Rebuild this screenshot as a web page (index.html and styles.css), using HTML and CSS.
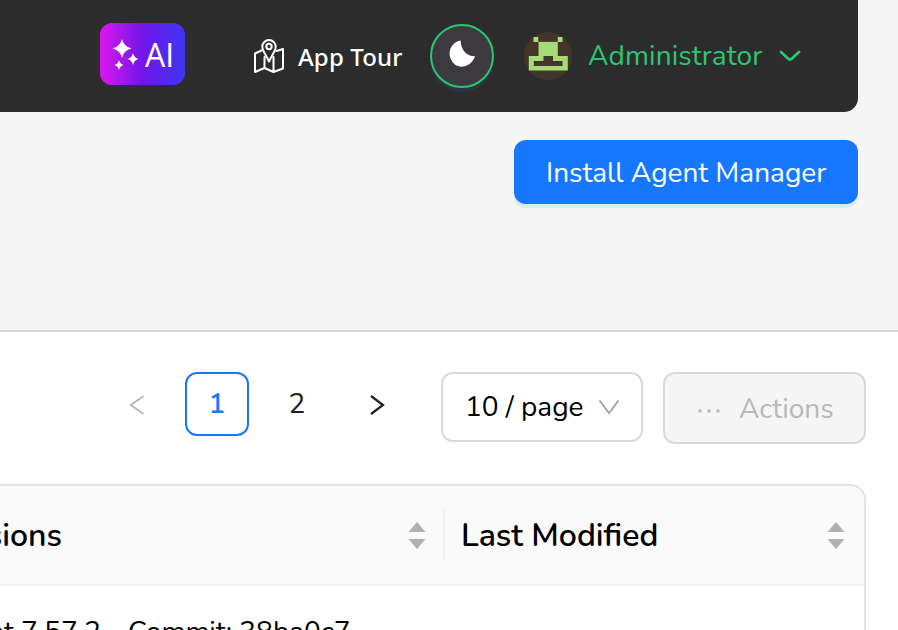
FILE: index.html
```html
<!DOCTYPE html>
<html lang="en">
<head>
<meta charset="utf-8">
<title>Agent Manager</title>
<link rel="stylesheet" href="styles.css">
</head>
<body>
<header class="topbar">
  <button class="ai">
    <svg width="28" height="32" viewBox="0 0 28 32" fill="#fff"><path d="M10 0Q11.800 7.700 19.500 9.500Q11.800 11.300 10 19Q8.200 11.300 .5 9.500Q8.200 7.700 10 0ZM21 14Q22.200 18.800 26.500 20Q22.200 21.200 21 26Q19.800 21.200 15.500 20Q19.800 18.800 21 14ZM7 21Q7.900 25.100 11.500 26Q7.900 26.900 7 31Q6.100 26.900 2.500 26Q6.100 25.100 7 21Z"/></svg>
    <span>AI</span>
  </button>
  <div class="tour">
    <svg width="32" height="36" viewBox="0 0 32 36" fill="none" stroke="#fff" stroke-width="2" stroke-linejoin="round" stroke-linecap="round"><path d="M8.500 11.500L2 14.500V33L11.500 29L20.500 33L30 29.500V10L23.500 12M11.500 18V29M20.500 18V33"/><path d="M16 22.500C13.500 16.500 9.300 12 9.300 7.700A6.700 6.700 0 0 1 22.700 7.700C22.700 12 18.500 16.500 16 22.500Z"/><circle cx="16" cy="7.500" r="2.700"/></svg>
    <span>App Tour</span>
  </div>
  <button class="theme">
    <svg width="30" height="30" viewBox="0 0 30 30" fill="#fff"><path d="M14.700 1.500C14.700 10.500 20.500 17.500 29 17.300C27.200 23.500 21.500 27.800 15 27.800A13.300 13.300 0 0 1 14.700 1.500Z"/></svg>
  </button>
  <div class="user">
    <svg class="avatar" width="48" height="48" viewBox="0 0 48 48"><circle cx="24" cy="24" r="24" fill="#433529"/><path fill="#a5dc78" d="M9.500 5H14.500V9.500H33.500V5H38.500V10H33.800V24H43.800V38.500H4.800V24H14.500V10H9.500ZM19.500 24V29H9.800V34H38.500V29H29V24Z"/><path fill="#433529" d="M14.500 4H33.500V9.700H14.500Z"/></svg>
    <span>Administrator</span>
    <svg class="caret" width="22" height="12" viewBox="0 0 22 12" fill="none" stroke="#2dc573" stroke-width="2.800" stroke-linecap="round"><path d="M2 2L9.300 8.700Q11 10.200 12.700 8.700L20 2"/></svg>
  </div>
</header>
<section class="hero"><button class="install"><span>Install Agent Manager</span></button></section>
<main>
  <div class="toolbar">
    <svg class="prev" width="16" height="22" viewBox="0 0 16 22" fill="none" stroke="#b8b8b8" stroke-width="2"><path d="M15.500 2L3 11L15.500 20"/></svg>
    <button class="page current">1</button>
    <button class="page">2</button>
    <svg class="next" width="16" height="22" viewBox="0 0 16 22" fill="none" stroke="#202020" stroke-width="2.200"><path d="M1 2L13 11L1 20"/></svg>
    <div class="size"><span>10 / page</span><svg width="22" height="16" viewBox="0 0 22 16" fill="none" stroke="#a6a6a6" stroke-width="2"><path d="M1.500 .5L11 13L20.500 .5"/></svg></div>
    <button class="actions" disabled><svg width="24" height="6" viewBox="0 0 24 6" fill="#b8b8b8"><circle cx="3" cy="3" r="1.800"/><circle cx="12" cy="3" r="1.800"/><circle cx="21" cy="3" r="1.800"/></svg><span>Actions</span></button>
  </div>
  <div class="table">
    <div class="head">
      <div class="cell versions"><span class="clip">Versions</span><svg width="18" height="28" viewBox="0 0 18 28" fill="#b0b0b0"><path d="M9 1L17.500 11H.5ZM9 28L17.500 18H.5Z"/></svg></div>
      <div class="cell modified"><span>Last Modified</span><svg width="18" height="28" viewBox="0 0 18 28" fill="#b0b0b0"><path d="M9 1L17.500 11H.5ZM9 28L17.500 18H.5Z"/></svg></div>
    </div>
    <div class="row"><span class="agent">Agent 7.57.2</span><span class="dash">-</span><span class="commit">Commit: 38ba0c7</span></div>
  </div>
</main>
</body>
</html>
```
FILE: styles.css
```css
* { box-sizing: border-box; }
body { margin: 0; height: 630px; overflow: hidden; background: #f5f5f5; font: 28px/40px Nunito, Lato, sans-serif; color: #000; }
button { font: inherit; padding: 0; border: 0; }
svg { display: block; flex: none; }
span { white-space: nowrap; }
.topbar { display: flex; width: 858px; height: 112px; padding: 23px 0 0 100px; background: #2c2c2c; border-radius: 0 0 14px 0; }
.ai { display: flex; width: 85px; height: 62px; margin-top: .4px; padding: 15.6px 0 0 12px; gap: 5px; border-radius: 12px; color: #fff; background: linear-gradient(90deg, #dc17ee, #7016e8 50%, #4035f3); font: 32px/34px "Open Sans", sans-serif; }
.ai span { margin-top: -1px; }
.tour { display: flex; width: 149px; margin-left: 68px; padding-top: 16px; gap: 13px; color: #fff; font: 500 24px/36px "Noto Sans", sans-serif; letter-spacing: .15px; }
.theme { display: flex; width: 64px; height: 64px; margin: 1px 0 0 28px; padding: 13px 0 0 16px; border: 2px solid #2dc573; border-radius: 50%; background: #3c393f; box-shadow: 0 4px 0 #293642; }
.theme svg { margin-left: -2px; }
.user { display: flex; margin: 9px 0 0 30px; color: #2dc573; line-height: 48px; }
.user span { width: 175px; margin-left: 16px; letter-spacing: .15px; }
.caret { margin: 18px 0 0 16px; }
.hero { height: 220px; display: flex; justify-content: flex-end; padding: 28px 40px 0 0; border-bottom: 2px solid #d9d9d9; }
.install { width: 344px; height: 64px; border-radius: 12px; padding: 2px 0 0 32px; text-align: left; background: #1677ff; color: #fff; box-shadow: 0 4px 0 #dceaf6; }
main { height: 298px; background: #fff; overflow: hidden; }
.toolbar { display: flex; padding: 40px 0 0 128px; height: 152px; }
.prev { margin-top: 22px; }
.page { width: 64px; height: 64px; margin-left: 41px; border-radius: 12px; background: none; color: #202020; }
.page + .page { margin-left: 16px; }
.current { border: 2px solid #1677ff; color: #1677ff; font-weight: 600; }
.next { margin: 22px 0 0 41px; }
.size { display: flex; width: 202px; height: 70px; margin-left: 55px; padding: 13px 0 0 22px; border: 2px solid #d9d9d9; border-radius: 12px; }
.size span { width: 120px; margin-right: 13px; }
.size svg { margin-top: 13px; }
.actions { display: flex; width: 203px; height: 72px; margin-left: 20px; padding: 15px 0 0 32px; gap: 18px; border: 2px solid #d9d9d9; border-radius: 12px; background: #f5f5f5; color: #b8b8b8; }
.actions svg { margin-top: 19px; }
.table { width: 866px; height: 300px; border: 2px solid #e0e2ee; border-left: 0; border-radius: 0 16px 0 0; overflow: hidden; }
.head { display: flex; align-items: center; height: 100px; background: #fafafa; border-bottom: 2px solid #f0f0f0; font-size: 32px; font-weight: 600; }
.head span { padding-top: 2px; }
.cell { display: flex; align-items: center; height: 52px; justify-content: space-between; }
.versions { width: 445px; padding-right: 17px; border-right: 2px solid #f0f0f0; }
.clip { width: 62px; display: flex; justify-content: flex-end; }
.modified { flex: 1; padding: 0 19px 0 16px; }
.row { display: flex; padding-top: 26px; }
.agent { width: 101px; display: flex; justify-content: flex-end; }
.dash { width: 27px; padding-left: 8px; }
```
